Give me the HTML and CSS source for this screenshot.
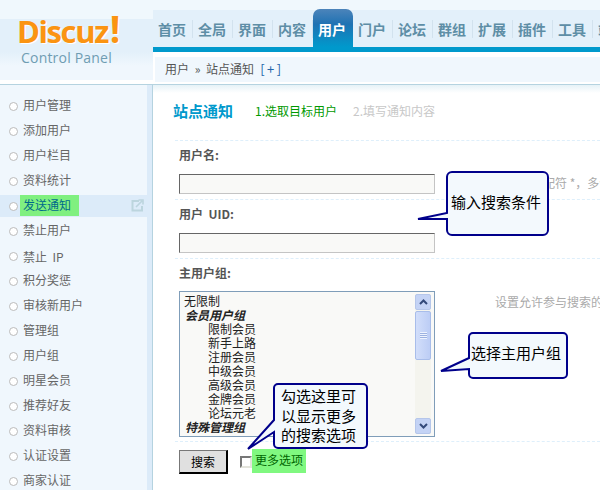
FILE: index.html
```html
<!DOCTYPE html>
<html lang="zh">
<head>
<meta charset="utf-8">
<title>站点通知</title>
<link rel="stylesheet" href="styles.css">
</head>
<body>
<div class="app">
  <header class="brand">
    <div class="logo">Discuz<span class="logo-bang">!</span></div>
    <div class="logo-sub">Control Panel</div>
  </header>
  <div class="top">
    <nav class="nav">
      <a class="nav-item">首页</a><a class="nav-item">全局</a><a class="nav-item">界面</a><a class="nav-item">内容</a><a class="nav-item active">用户</a><a class="nav-item">门户</a><a class="nav-item">论坛</a><a class="nav-item">群组</a><a class="nav-item">扩展</a><a class="nav-item">插件</a><a class="nav-item">工具</a><a class="nav-item">站长</a>
    </nav>
    <div class="crumb-wrap">
      <div class="crumb">用户 » 站点通知<span class="crumb-plus">[+]</span></div>
    </div>
  </div>
  <aside class="side">
    <ul class="menu">
      <li class="menu-item"><span>用户管理</span></li>
      <li class="menu-item"><span>添加用户</span></li>
      <li class="menu-item"><span>用户栏目</span></li>
      <li class="menu-item"><span>资料统计</span></li>
      <li class="menu-item current"><span class="mark">发送通知</span>
        <svg class="ext" width="13" height="13" viewBox="0 0 13 13"><path d="M8 2H1.5v9.5H11V7" fill="none" stroke="#bcd5de" stroke-width="2"/><path d="M5 8l6-6M7.5 1H12v4.5" fill="none" stroke="#bcd5de" stroke-width="1.6"/></svg>
      </li>
      <li class="menu-item"><span>禁止用户</span></li>
      <li class="menu-item lower"><span>禁止&nbsp; IP</span></li>
      <li class="menu-item"><span>积分奖惩</span></li>
      <li class="menu-item"><span>审核新用户</span></li>
      <li class="menu-item"><span>管理组</span></li>
      <li class="menu-item"><span>用户组</span></li>
      <li class="menu-item"><span>明星会员</span></li>
      <li class="menu-item"><span>推荐好友</span></li>
      <li class="menu-item"><span>资料审核</span></li>
      <li class="menu-item"><span>认证设置</span></li>
      <li class="menu-item"><span>商家认证</span></li>
    </ul>
  </aside>
  <main class="main">
    <div class="steps">
      <h1 class="title">站点通知</h1>
      <span class="step on">1.选取目标用户</span>
      <span class="step off">2.填写通知内容</span>
    </div>
    <section class="field">
      <div class="label">用户名:</div>
      <div class="row"><div class="input"></div><div class="tip">可使用通配符 *，多个用户名用半角逗号隔开</div></div>
    </section>
    <section class="field">
      <div class="label">用户&nbsp; UID:</div>
      <div class="row"><div class="input"></div></div>
    </section>
    <section class="field field-list">
      <div class="label">主用户组:</div>
      <div class="row">
        <div class="list">
          <div class="list-body">
            <div>无限制</div>
            <div class="group">会员用户组</div>
            <div class="opt">限制会员</div>
            <div class="opt">新手上路</div>
            <div class="opt">注册会员</div>
            <div class="opt">中级会员</div>
            <div class="opt">高级会员</div>
            <div class="opt">金牌会员</div>
            <div class="opt">论坛元老</div>
            <div class="group">特殊管理组</div>
          </div>
          <div class="scroll">
            <div class="sb-btn"><svg width="9" height="6" viewBox="0 0 9 6"><path d="M1 5l3.5-3.5L8 5" fill="none" stroke="#33497a" stroke-width="2"/></svg></div>
            <div class="sb-thumb"><span class="grip"></span></div>
            <div class="sb-space"></div>
            <div class="sb-btn"><svg width="9" height="6" viewBox="0 0 9 6"><path d="M1 1l3.5 3.5L8 1" fill="none" stroke="#33497a" stroke-width="2"/></svg></div>
          </div>
        </div>
        <div class="tip tip-list">设置允许参与搜索的用户组，可以按住 CTRL 多选</div>
      </div>
    </section>
    <div class="actions">
      <button class="btn">搜索</button>
      <span class="check"></span>
      <span class="more">更多选项</span>
    </div>
  </main>
</div>

<div class="callout callout-a">
  <svg class="callout-shape" width="136" height="70" viewBox="0 0 136 70"><path d="M36 2H127a5 5 0 0 1 5 5V60a5 5 0 0 1-5 5H36a5 5 0 0 1-5-5V49H2L31 43V7a5 5 0 0 1 5-5Z" fill="#f3f9fd" stroke="#00008b" stroke-width="2"/></svg>
  <div class="callout-text">输入搜索条件</div>
</div>
<div class="callout callout-b">
  <svg class="callout-shape" width="132" height="50" viewBox="0 0 132 50"><path d="M34 2H124a4 4 0 0 1 4 4V43a4 4 0 0 1-4 4H34a4 4 0 0 1-4-4V38L2 40L30 27V6a4 4 0 0 1 4-4Z" fill="#f3f9fd" stroke="#00008b" stroke-width="2"/></svg>
  <div class="callout-text">选择主用户组</div>
</div>
<div class="callout callout-c">
  <svg class="callout-shape" width="124" height="72" viewBox="0 0 124 72"><path d="M32 2H117a4 4 0 0 1 4 4V62a4 4 0 0 1-4 4H32a4 4 0 0 1-4-4V50L2 67L28 38V6a4 4 0 0 1 4-4Z" fill="#f3f9fd" stroke="#00008b" stroke-width="2"/></svg>
  <div class="callout-text">勾选这里可<br>以显示更多<br>的搜索选项</div>
</div>
</body>
</html>
```
FILE: styles.css
```css
* { box-sizing: border-box; }
html, body { margin: 0; padding: 0; width: 600px; height: 490px; overflow: hidden; background: #fff; }
body {
  position: relative;
  font: 12px/14px "Noto Sans CJK SC", "Liberation Sans", sans-serif;
  color: #555;
}
.app {
  display: grid;
  grid-template-columns: 153px 447px;
  grid-template-rows: 85px 405px;
  width: 600px;
  height: 490px;
  overflow: hidden;
}

/* brand */
.brand {
  padding: 10px 0 0 17px;
  border-bottom: 1px solid #b5d3e0;
  background: linear-gradient(#f0f8fd 0, #f0f8fd 19px, #e3f0fa 19px, #e3f0fa 52px, #f0f7fd 66px, #f0f7fd 80px, #fff 80px);
}
.logo {
  font: bold 31px/38px "Open Sans", "Liberation Sans", sans-serif;
  letter-spacing: -1.4px;
  color: #fb9412;
  text-shadow: 1px 1px 0 #fff;
}
.logo-bang { font-size: 37px; margin-left: 2px; }
.logo-sub {
  margin: -1px 0 0 4px;
  font: 14px/17px "Open Sans", "Liberation Sans", sans-serif;
  color: #6f9db3;
  letter-spacing: 0.2px;
}

/* top */
.top { display: flex; flex-direction: column; min-width: 0; }
.nav {
  display: flex;
  height: 52px;
  padding-top: 9px;
  overflow: hidden;
  border-bottom: 5px solid #0099cc;
  background: linear-gradient(#f0f8fd 0, #f0f8fd 10px, #e3f0fa 10px, #e3f0fa 47px);
}
.nav-item {
  flex: 0 0 40px;
  height: 38px;
  padding: 10px 2px 0 0;
  text-align: center;
  font-size: 14px;
  line-height: 20px;
  font-weight: 700;
  color: #5e8ea6;
  background: linear-gradient(#d2e2ee, #d2e2ee) right 11px / 1px 18px no-repeat;
}
.nav-item.active {
  color: #fff;
  border-radius: 7px 7px 0 0;
  background: linear-gradient(#4c84ba, #1f72b3 40%, #0099cc);
}
.crumb-wrap {
  flex: 1;
  padding: 5px 0 2px 2px;
  border-bottom: 1px solid #b5d3e0;
}
.crumb {
  height: 25px;
  padding-left: 10px;
  line-height: 24px;
  word-spacing: 3px;
  color: #555;
  background: #f0f7fd;
}
.crumb-plus { margin-left: 6px; letter-spacing: 2.5px; font-size: 13px; color: #2366a8; }

/* side */
.side {
  border-right: 1px solid #b5d3e0;
  background: linear-gradient(90deg, #f0f7fd 147px, #dcebf9 147px);
  overflow: hidden;
}
.menu { list-style: none; margin: 8px 0 0; padding: 0; width: 147px; }
.menu-item {
  display: flex;
  align-items: center;
  position: relative;
  height: 25px;
  padding: 0 0 2px 23px;
  color: #666;
}
.menu-item::before {
  content: "";
  position: absolute;
  left: 9px;
  top: 9px;
  width: 7px;
  height: 7px;
  border: 1px solid #bbb;
  border-radius: 50%;
  background: #fff;
}
.menu-item.lower > span { padding-top: 4px; }
.menu-item.current {
  padding-bottom: 0;
  background: linear-gradient(transparent 2px, #dcebf9 2px, #dcebf9 24px, transparent 24px);
}
.mark {
  height: 21px;
  margin-left: -3px;
  padding: 0 3px;
  width: 59px;
  line-height: 19px;
  color: #006a8a;
  background: #80f080;
}
.ext { position: absolute; left: 131px; top: 6px; }

/* main */
.main {
  padding: 8px 0 0 20px;
  background: linear-gradient(#e6f2f7, #fff 8px);
  overflow: hidden;
}
.steps { display: flex; align-items: center; height: 48px; padding-bottom: 11px; border-bottom: 1px dashed #deeffb; margin-left: 2px; }
.title { margin: 0 22px 0 -2px; font-size: 15px; line-height: 20px; font-weight: 700; color: #0099cc; flex: 0 0 60px; }
.step { margin-right: 16px; white-space: nowrap; }
.step.on { color: #090; }
.step.off { color: #c8c8c8; }
.field { height: 59px; padding: 7px 0 0 4px; border-bottom: 1px dashed #deeffb; margin-left: 2px; }
.field-list { height: 183px; }
.label { font-weight: 700; line-height: 14px; color: #555; }
.row { display: flex; margin-top: 12px; }
.input {
  flex: 0 0 256px;
  height: 20px;
  border: 1px solid;
  border-color: #666 #c4c4c4 #c4c4c4 #666;
  background: #f9f9f7;
}
.tip { margin: 2px 0 0 60px; white-space: nowrap; color: #aaa; }
.tip-list { margin-top: 3px; }
.list {
  display: flex;
  flex: 0 0 256px;
  height: 146px;
  margin-top: -1px;
  padding: 2px;
  border: 1px solid #7f9db9;
  background: #f9f9f7;
}
.list-body { flex: 1; padding: 0 0 0 2px; line-height: 14px; color: #222; overflow: hidden; }
.group { font-weight: 700; font-style: italic; padding-left: 1px; color: #222; }
.opt { padding-left: 24px; }
.scroll { display: flex; flex-direction: column; width: 16px; margin-right: 1px; background: #f4f4ee; }
.sb-btn {
  display: flex; align-items: center; justify-content: center;
  height: 16px;
  border: 1px solid #b5c6ea;
  border-radius: 2px;
  background: #c4d3f5;
}
.sb-thumb {
  display: flex; align-items: center; justify-content: center;
  height: 49px;
  margin-top: 1px;
  border: 1px solid #a8bdea;
  border-radius: 2px;
  background: linear-gradient(90deg, #d2defa, #bccdf5);
}
.grip { width: 7px; height: 7px; background: repeating-linear-gradient(#eef3fe 0 1px, #9db2e0 1px 2px); }
.sb-space { flex: 1; }
.actions { display: flex; align-items: flex-start; padding: 7px 0 0 4px; margin-left: 2px; }
.btn {
  width: 49px;
  height: 24px;
  margin: 1px 12px 0 0;
  padding: 0;
  border: 1px solid;
  border-color: #777 #000 #000 #777;
  border-width: 1px 2px 2px 1px;
  font: 12px/20px "Noto Sans CJK SC", sans-serif;
  color: #000;
  background: #e0e0e0;
}
.check {
  width: 12px;
  height: 12px;
  margin-top: 7px;
  border: 2px solid;
  border-color: #777 #e4e4dc #e4e4dc #777;
  background: #fff;
}
.more {
  width: 54px;
  height: 24px;
  padding-left: 3px;
  line-height: 22px;
  color: #060;
  background: #80f880;
}

/* callouts */
.callout { position: absolute; color: #000; font-size: 15px; line-height: 19.5px; }
.callout-shape { display: block; }
.callout-text { position: absolute; white-space: nowrap; }
.callout-a { left: 416px; top: 170px; }
.callout-a .callout-text { left: 35px; top: 22px; }
.callout-b { left: 439px; top: 331px; }
.callout-b .callout-text { left: 32px; top: 12px; }
.callout-c { left: 246px; top: 382px; }
.callout-c .callout-text { left: 35px; top: 4px; }
```
